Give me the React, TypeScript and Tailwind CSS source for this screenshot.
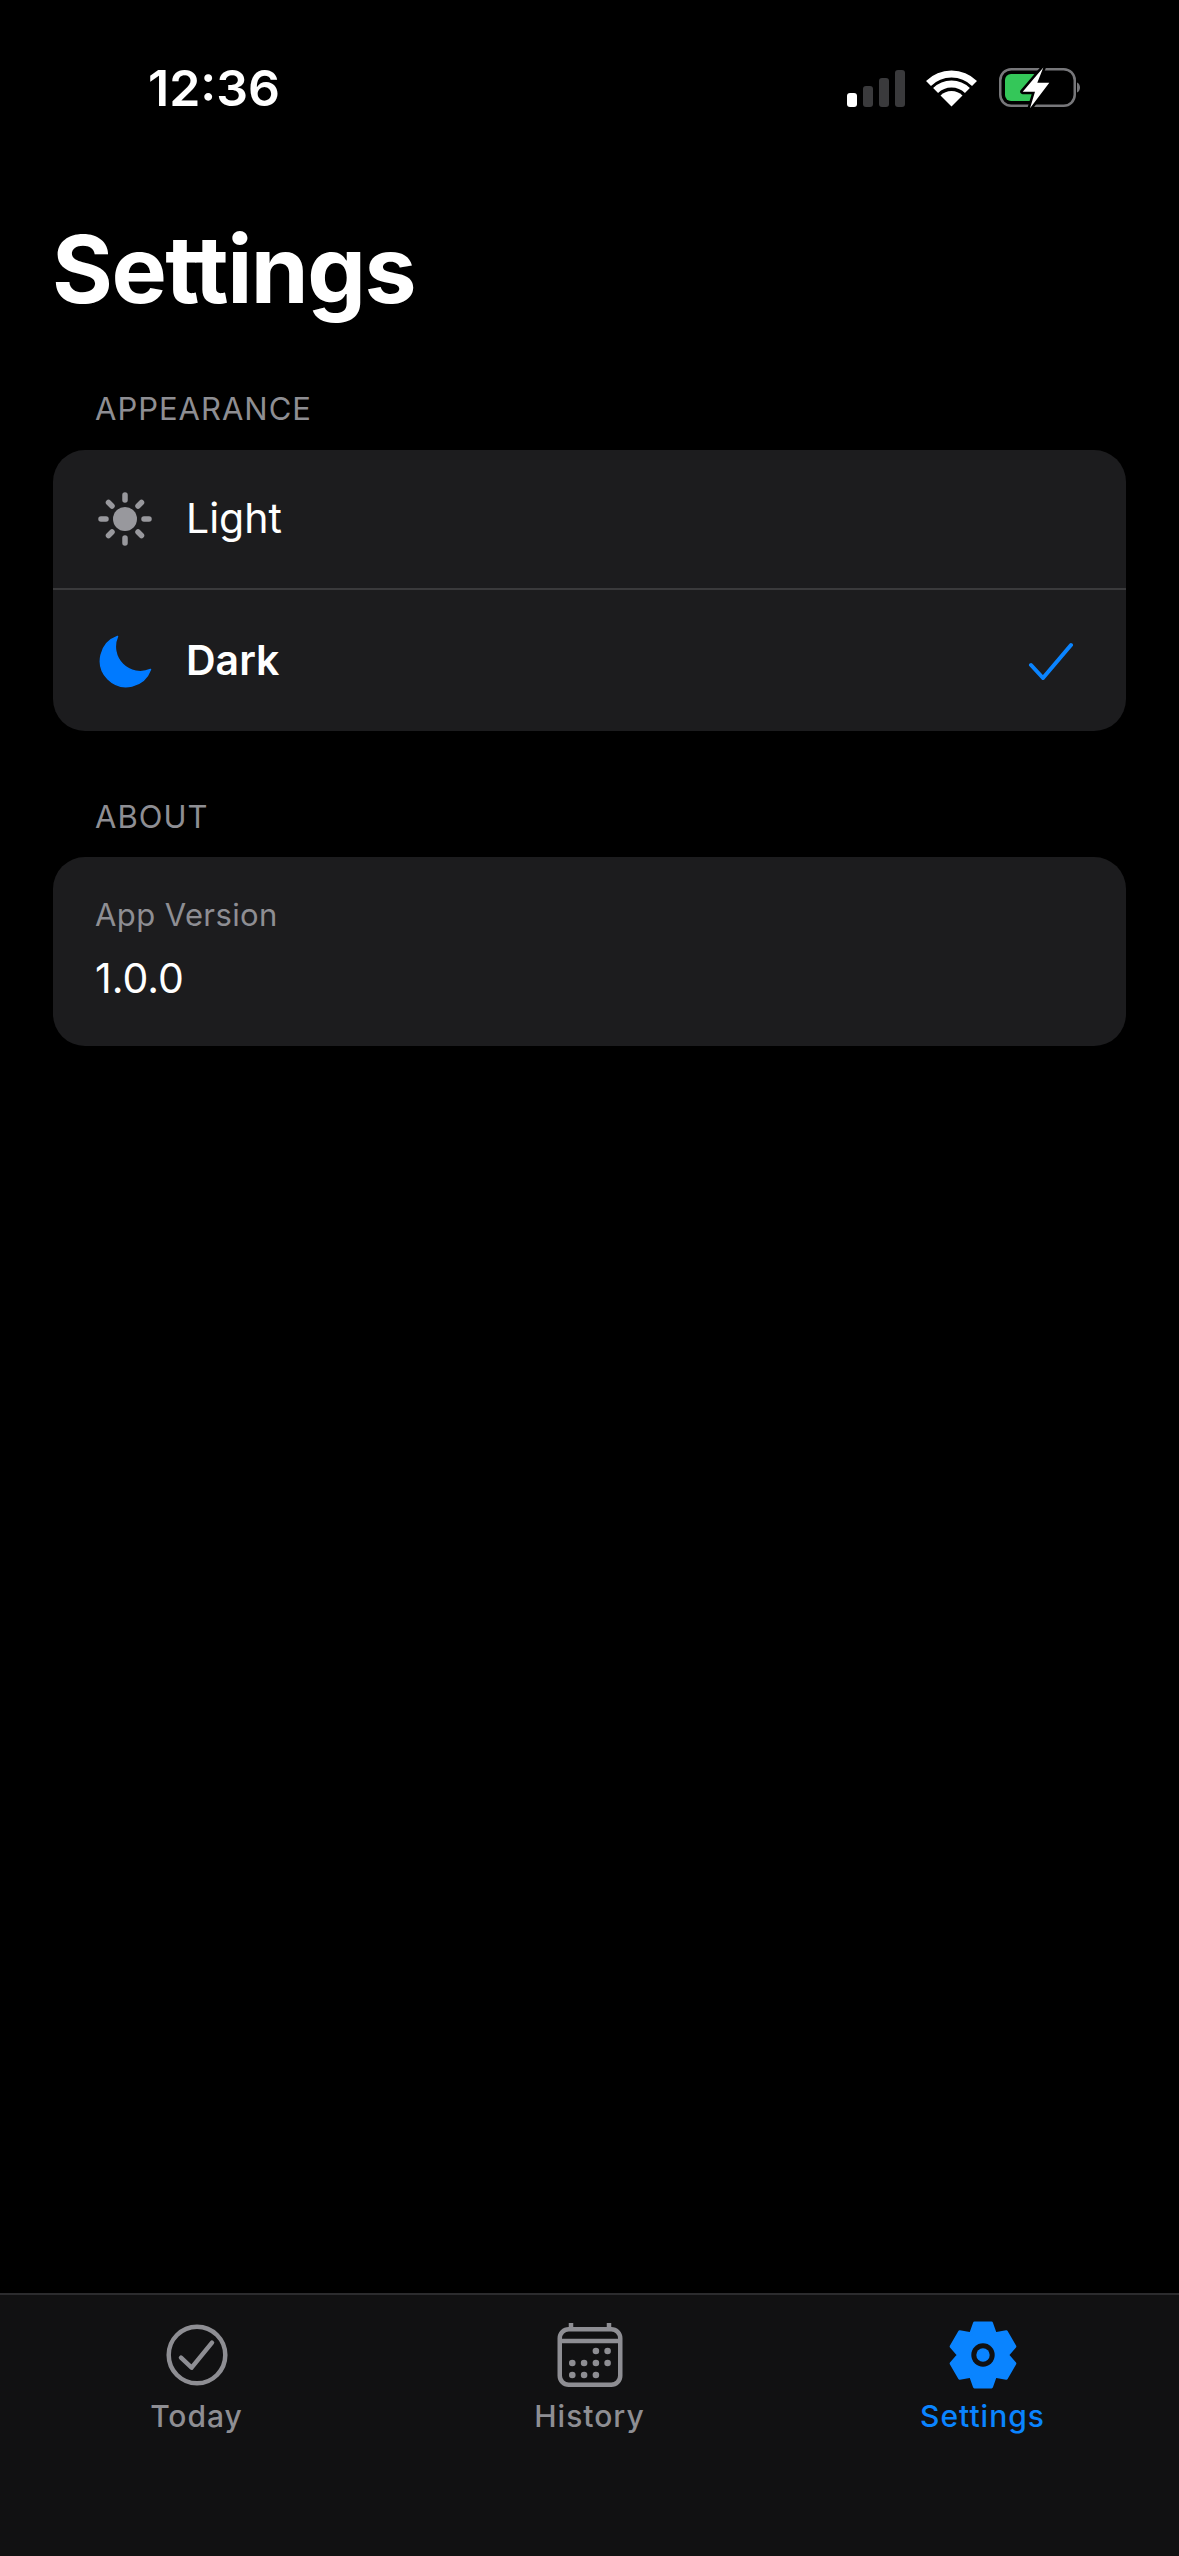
import React from "react";

const font = { fontFamily: "Inter, sans-serif" };

// six wide lobes, one pointing straight up, corners rounded by the stroke
const gearPoints = Array.from({ length: 6 }, (_, k) => {
  const a = k * 60;
  return [
    [a - 15, 33],
    [a + 15, 33],
    [a + 30, 24.5],
  ];
})
  .flat()
  .map(([deg, r]) => {
    const rad = (deg * Math.PI) / 180;
    return `${(34 + r * Math.sin(rad)).toFixed(2)},${(34 - r * Math.cos(rad)).toFixed(2)}`;
  })
  .join(" ");

function StatusBar() {
  return (
    <div className="flex items-center justify-between h-[88px] mt-[44px] pl-[148px] pr-[97px]">
      <span className="text-[50px] font-semibold text-white leading-none">12:36</span>
      <div className="flex items-center gap-[21px]">
        <div className="flex items-end gap-[6px]">
          <div className="w-[10px] h-[14px] rounded-[3px] bg-white" />
          <div className="w-[10px] h-[21px] rounded-[3px] bg-[#3a3a3c]" />
          <div className="w-[10px] h-[29px] rounded-[3px] bg-[#3a3a3c]" />
          <div className="w-[10px] h-[37px] rounded-[3px] bg-[#3a3a3c]" />
        </div>
        <svg width="51" height="37" viewBox="0 0 51 37" fill="none">
          <path d="M2.5 13.5a32.5 32.5 0 0 1 46 0" stroke="#fff" strokeWidth="7" />
          <path d="M9.6 20.6a22.5 22.5 0 0 1 31.8 0" stroke="#fff" strokeWidth="7" />
          <path d="M25.5 36.5L14.5 25.5a15.5 15.5 0 0 1 22 0z" fill="#fff" />
        </svg>
        <svg width="84" height="42" viewBox="0 0 84 42" fill="none">
          <rect x="2.25" y="2.25" width="74.5" height="36.5" rx="11" stroke="#77777a" strokeWidth="2.5" />
          <rect x="7" y="7" width="34" height="27" rx="6" fill="#34c759" />
          <path d="M79 15.5c4 1.5 4 8.5 0 10z" fill="#77777a" />
          <path
            d="M45.3.6L24.7 24.7H37L32 41.3 51.3 15.7H39.3z"
            fill="#fff"
            stroke="#000"
            strokeWidth="5"
            strokeLinejoin="round"
            paintOrder="stroke"
          />
        </svg>
      </div>
    </div>
  );
}

function Sun() {
  return (
    <svg width="56" height="56" viewBox="0 0 56 56" fill="none" stroke="#98989d" strokeWidth="5.5" strokeLinecap="round">
      <circle cx="28" cy="28" r="12" fill="#98989d" stroke="none" />
      <path d="M28 4v5M28 47v5M4 28h5M47 28h5M11.5 11.5l3.5 3.5M41 41l3.5 3.5M11.5 44.5l3.5-3.5M41 15l3.5-3.5" />
    </svg>
  );
}

function Moon() {
  return (
    <svg width="56" height="56" viewBox="0 0 56 56">
      <path
        d="M20.5 3.5A25.8 25.8 0 1 0 53.5 36.5 25 25 0 0 1 20.5 3.5z"
        fill="#007aff"
        stroke="#007aff"
        strokeWidth="1.5"
        strokeLinejoin="round"
      />
    </svg>
  );
}

function SectionLabel({ children }: { children: React.ReactNode }) {
  return <div className="pl-[95px] text-[31px] leading-[36px] tracking-[1px] text-[#8e8e93]">{children}</div>;
}

function TabToday() {
  return (
    <svg width="64" height="64" viewBox="0 0 64 64" fill="none" stroke="#8e8e93" strokeWidth="4.5">
      <circle cx="32" cy="32" r="28.3" />
      <path d="M16 34.7l10.6 10 20.4-25" strokeLinecap="round" strokeLinejoin="round" />
    </svg>
  );
}

function TabHistory() {
  const dots = [
    [38.9, 29],
    [50.6, 29],
    [15.3, 41],
    [27.1, 41],
    [38.9, 41],
    [50.6, 41],
    [15.3, 53],
    [27.1, 53],
    [38.9, 53],
  ];
  return (
    <svg width="66" height="66" viewBox="0 0 66 66" fill="none" stroke="#8e8e93" strokeWidth="4.5">
      <rect x="2.75" y="7.25" width="60.5" height="55.5" rx="9" />
      <path d="M3 19h60M14 1v6M52 1v6" />
      <g fill="#8e8e93" stroke="none">
        {dots.map(([cx, cy]) => (
          <circle key={`${cx}-${cy}`} cx={cx} cy={cy} r="3.3" />
        ))}
      </g>
    </svg>
  );
}

function TabSettings() {
  return (
    <svg width="68" height="68" viewBox="0 0 68 68">
      <polygon points={gearPoints} fill="#0a84ff" stroke="#0a84ff" strokeWidth="3" strokeLinejoin="round" />
      <circle cx="34" cy="34" r="11.7" fill="#111112" />
      <circle cx="34" cy="34" r="6.7" fill="#0a84ff" />
    </svg>
  );
}

export default function App() {
  const tabs = [
    { label: "Today", icon: <TabToday />, color: "text-[#8e8e93]" },
    { label: "History", icon: <TabHistory />, color: "text-[#8e8e93]" },
    { label: "Settings", icon: <TabSettings />, color: "text-[#0a84ff]" },
  ];

  return (
    <div className="w-[1179px] h-[2556px] bg-black flex flex-col" style={font}>
      <StatusBar />
      <h1 className="mt-[79px] ml-[52px] text-[93px] leading-[116px] font-bold tracking-[-1.5px] text-white [font-variant-ligatures:none]">Settings</h1>

      <div className="mt-[64px]">
        <SectionLabel>APPEARANCE</SectionLabel>
      </div>
      <div className="mt-[23px] mx-[53px] rounded-[32px] bg-[#1c1c1e] overflow-hidden">
        <div className="flex items-center h-[140px] pl-[44px] gap-[33px] border-b-2 border-[#3a3a3c]">
          <Sun />
          <span className="text-[41px] text-white">Light</span>
        </div>
        <div className="flex items-center justify-between h-[141px] pl-[44px] pr-[52px]">
          <div className="flex items-center gap-[33px]">
            <Moon />
            <span className="text-[41px] font-semibold text-white">Dark</span>
          </div>
          <svg width="46" height="38" viewBox="0 0 46 38" fill="none" stroke="#0a84ff" strokeWidth="4" strokeLinecap="round" strokeLinejoin="round">
            <path d="M3 23l12 13L43 3" />
          </svg>
        </div>
      </div>

      <div className="mt-[68px]">
        <SectionLabel>ABOUT</SectionLabel>
      </div>
      <div className="mt-[22px] mx-[53px] h-[189px] rounded-[32px] bg-[#1c1c1e] pl-[42px] pt-[39px]">
        <div className="text-[31px] leading-[38px] tracking-[0.4px] text-[#8e8e93]">App Version</div>
        <div className="mt-[19px] text-[41px] leading-[50px] text-white">1.0.0</div>
      </div>

      <div className="mt-auto h-[263px] bg-[#111112] border-t-2 border-[#2c2c2e] grid grid-cols-3 pt-[26px]">
        {tabs.map((tab) => (
          <div key={tab.label} className="flex flex-col items-center">
            <div className="h-[68px] flex items-center">{tab.icon}</div>
            <span className={`mt-[9px] text-[30px] leading-[36px] font-medium tracking-[1px] ${tab.color}`}>{tab.label}</span>
          </div>
        ))}
      </div>
    </div>
  );
}
